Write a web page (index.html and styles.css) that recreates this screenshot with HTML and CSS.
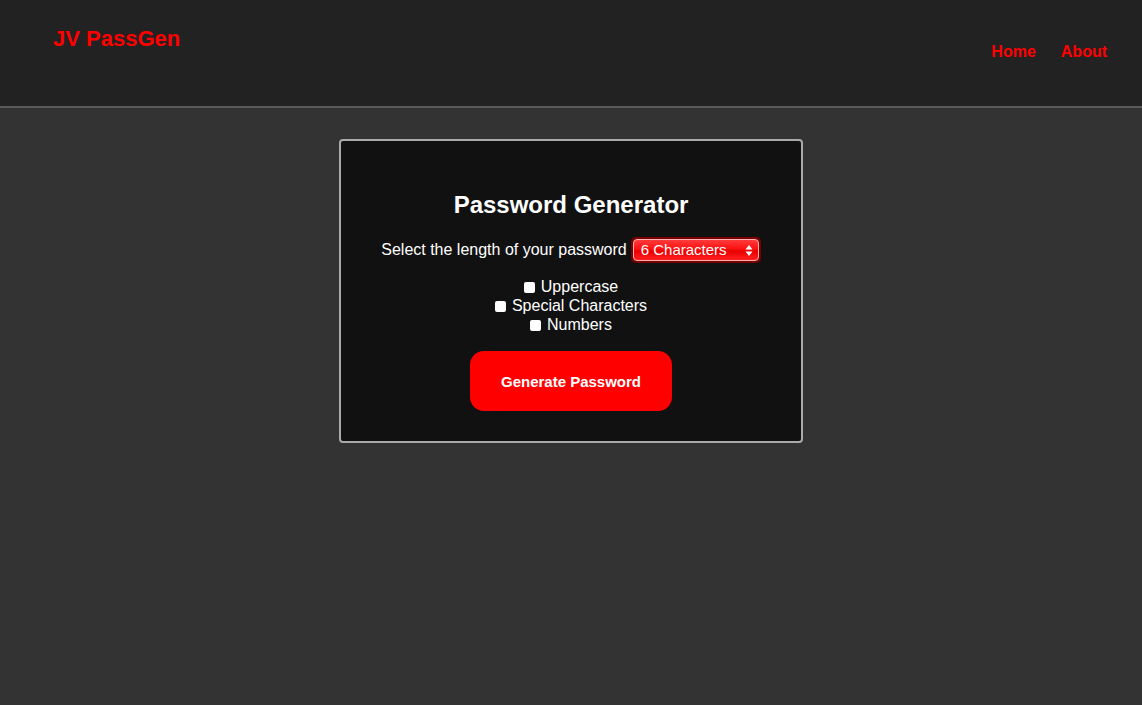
FILE: index.html
```html
<!DOCTYPE html>
<html>
<head>
<meta charset="utf-8">
<link rel="stylesheet" href="styles.css">
</head>
<body>
<header class="topbar">
  <div class="logo">JV PassGen</div>
  <nav class="nav">
    <a href="#" class="nav-link">Home</a>
    <a href="#" class="nav-link">About</a>
  </nav>
</header>
<main class="main">
  <section class="card">
    <h2 class="title">Password Generator</h2>
    <div class="length-row">
      <span class="label">Select the length of your password</span>
      <div class="select">
        <span class="select-text">6 Characters</span>
        <svg class="select-arrows" width="8" height="13" viewBox="0 0 8 13"><path d="M4 1 L7.5 5.5 H0.5 Z M4 12 L7.5 7.5 H0.5 Z" fill="#fff"/></svg>
      </div>
    </div>
    <div class="options">
      <label class="option"><span class="box"></span>Uppercase</label>
      <label class="option"><span class="box"></span>Special Characters</label>
      <label class="option"><span class="box"></span>Numbers</label>
    </div>
    <button class="generate">Generate Password</button>
  </section>
</main>
</body>
</html>
```
FILE: styles.css
```css
* { box-sizing: border-box; }
html, body { margin: 0; padding: 0; }
body {
  background: #333333;
  font-family: "Liberation Sans", Arial, Helvetica, sans-serif;
  color: #fff;
  min-height: 705px;
}
.topbar {
  height: 108px;
  background: #222222;
  border-bottom: 2px solid #5a5a5a;
  display: flex;
  justify-content: space-between;
  align-items: flex-start;
  padding: 0 35px 0 53px;
}
.logo {
  color: #ff0000;
  font-weight: bold;
  font-size: 22px;
  line-height: 26px;
  margin-top: 26px;
}
.nav {
  display: flex;
  gap: 25px;
  margin-top: 43px;
}
.nav-link {
  color: #ff0000;
  text-decoration: none;
  font-weight: bold;
  font-size: 16px;
  line-height: 18px;
}
.main {
  display: flex;
  justify-content: center;
  padding-top: 31px;
}
.card {
  width: 464px;
  background: #111111;
  border: 2px solid #aaaaaa;
  border-radius: 4px;
  padding: 50px 20px 30px;
  display: flex;
  flex-direction: column;
  align-items: center;
}
.title {
  margin: 0 0 18px;
  font-size: 24px;
  line-height: 28px;
  font-weight: bold;
  color: #fff;
}
.length-row {
  display: flex;
  align-items: center;
  gap: 4px;
  font-size: 16px;
  height: 26px;
}
.select {
  position: relative;
  width: 130px;
  height: 26px;
  border-radius: 5px;
  background: #7a0000;
  padding: 2px;
  display: flex;
}
.select::before {
  content: "";
  position: absolute;
  left: 2px; top: 2px; right: 2px; bottom: 2px;
  border-radius: 4px;
  border: 1px solid #ffb0b0;
  background: linear-gradient(#ff3b3b 0%, #ff1010 45%, #e80000 55%, #ff2020 100%);
}
.select-text {
  flex: 1;
  position: relative;
  padding-left: 8px;
  line-height: 22px;
  font-size: 15px;
  color: #fff;
}
.select-arrows {
  position: relative;
  margin: 5px 6px 0 0;
}
.options {
  margin-top: 14px;
  display: flex;
  flex-direction: column;
  align-items: center;
  font-size: 16px;
  line-height: 19px;
}
.option {
  display: flex;
  align-items: center;
  gap: 6px;
}
.box {
  width: 11px;
  height: 11px;
  background: #fff;
  border-radius: 2px;
  margin-top: 2px;
}
.generate {
  margin-top: 17px;
  width: 202px;
  height: 60px;
  border: none;
  border-radius: 14px;
  background: #ff0000;
  color: #fff;
  font-family: "Liberation Sans", Arial, sans-serif;
  font-weight: bold;
  font-size: 15px;
}
```
